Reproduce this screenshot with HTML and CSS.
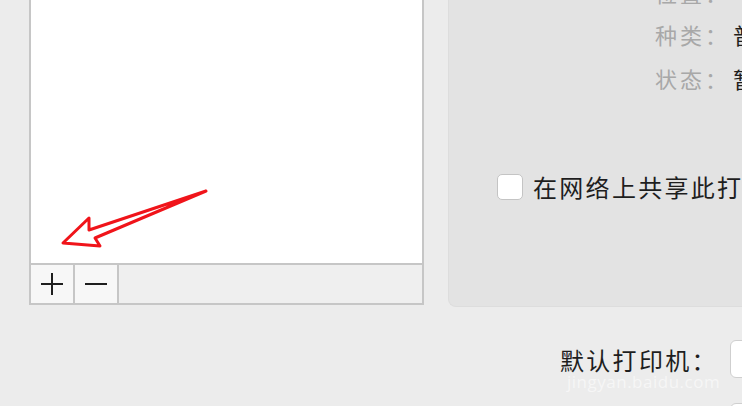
FILE: index.html
```html
<!DOCTYPE html>
<html lang="zh-CN">
<head>
<meta charset="utf-8">
<title>打印机</title>
<link rel="stylesheet" href="styles.css">
</head>
<body>
<div class="top">
  <div class="list">
    <div class="list-body"></div>
    <div class="list-bar">
      <button class="bar-btn" aria-label="添加">
        <svg width="24" height="24" viewBox="0 0 24 24"><path d="M12 1v22M1 12h22" stroke="#1e1e1e" stroke-width="2" fill="none"/></svg>
      </button>
      <button class="bar-btn" aria-label="移除">
        <svg width="24" height="24" viewBox="0 0 24 24"><path d="M1 12h22" stroke="#1e1e1e" stroke-width="2" fill="none"/></svg>
      </button>
      <div class="bar-fill"></div>
    </div>
  </div>
  <div class="panel">
    <div class="info">
      <div class="label">位置：</div><div class="value"></div>
      <div class="label">种类：</div><div class="value">普通</div>
      <div class="label">状态：</div><div class="value">暂停</div>
    </div>
    <label class="share">
      <span class="checkbox"></span>
      <span class="share-text">在网络上共享此打印机</span>
    </label>
  </div>
</div>
<div class="bottom">
  <div class="row">
    <span class="row-label">默认打印机：</span>
    <span class="popup"></span>
  </div>
  <div class="row">
    <span class="row-label"></span>
    <span class="popup"></span>
  </div>
</div>
<div class="watermark">jingyan.baidu.com</div>
<svg class="arrow" width="742" height="406" viewBox="0 0 742 406">
  <path d="M206 191 L89 230 L89 218 L63 243 L100 246 L95 238 Z" fill="none" stroke="#f0141a" stroke-width="3" stroke-linejoin="round" stroke-linecap="round"/>
</svg>
</body>
</html>
```
FILE: styles.css
```css
html, body {
  margin: 0;
  padding: 0;
}
body {
  width: 742px;
  height: 406px;
  overflow: hidden;
  background: #ececec;
  font-family: "Noto Sans CJK SC", "Noto Sans", sans-serif;
  position: relative;
}
.top {
  display: flex;
  align-items: flex-start;
  width: 742px;
  overflow: hidden;
}
.list {
  flex: none;
  margin-left: 29px;
  width: 391px;
  height: 303px;
  border: 2px solid #c6c6c6;
  border-top: none;
  display: flex;
  flex-direction: column;
  background: #fff;
}
.list-body {
  flex: 1;
  background: #fff;
}
.list-bar {
  height: 38px;
  border-top: 2px solid #c6c6c6;
  display: flex;
  background: #efefef;
}
.bar-btn {
  width: 44px;
  height: 38px;
  padding: 0;
  margin: 0;
  border: none;
  border-right: 2px solid #c6c6c6;
  background: #f7f7f7;
  display: flex;
  align-items: center;
  justify-content: center;
}
.bar-fill {
  flex: 1;
}
.panel {
  flex: none;
  margin-left: 24px;
  width: 340px;
  height: 306px;
  background: #e3e3e3;
  border-left: 1px solid #dddddd;
  border-bottom: 1px solid #dddddd;
  border-bottom-left-radius: 8px;
  display: flex;
  flex-direction: column;
  overflow: hidden;
}
.info {
  margin-top: -29px;
  margin-left: 206px;
  display: grid;
  grid-template-columns: 78px auto;
  grid-template-rows: 42px 44px 43px;
  font-size: 22px;
  letter-spacing: 3px;
  line-height: 43px;
}
.label {
  color: #a8a8a8;
  white-space: nowrap;
}
.value {
  color: #1e1e1e;
  white-space: nowrap;
}
.share {
  margin-top: 73px;
  margin-left: 48px;
  display: flex;
  align-items: center;
  gap: 10px;
}
.checkbox {
  width: 24px;
  height: 24px;
  background: #fff;
  border: 1px solid #c4c4c4;
  border-radius: 5px;
  flex: none;
}
.share-text {
  font-size: 24px;
  letter-spacing: 2.3px;
  color: #1e1e1e;
  white-space: nowrap;
  line-height: 28px;
}
.bottom {
  padding-top: 33px;
  display: flex;
  flex-direction: column;
  gap: 25px;
  width: 742px;
  overflow: hidden;
}
.row {
  display: flex;
  align-items: center;
  padding-left: 560px;
  gap: 8px;
}
.row-label {
  font-size: 24px;
  letter-spacing: 2.3px;
  color: #1e1e1e;
  white-space: nowrap;
  width: 162px;
  flex: none;
}
.popup {
  width: 110px;
  height: 36px;
  background: #fff;
  border: 1px solid #cfcfcf;
  border-radius: 6px;
  flex: none;
}
.watermark {
  position: absolute;
  left: 567px;
  top: 370px;
  font-family: "Open Sans", "Noto Sans", sans-serif;
  font-size: 17px;
  letter-spacing: 0.5px;
  color: rgba(255, 255, 255, 0.55);
}
.arrow {
  position: absolute;
  left: 0;
  top: 0;
  pointer-events: none;
}
```
